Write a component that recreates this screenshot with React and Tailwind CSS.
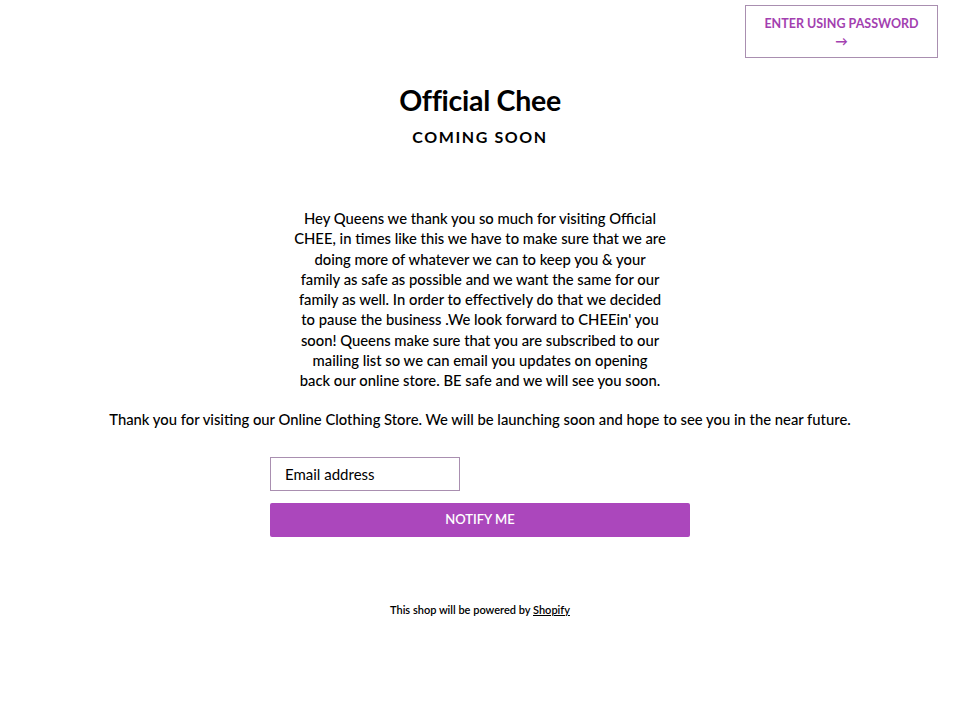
export default function App() {
    return (
        <div className="min-h-[720px] w-full bg-white text-black" style={{ fontFamily: '"Lato", "Open Sans", sans-serif' }}>
            <header className="flex justify-end px-[22px] pt-[5px]">
                <a className="flex h-[53px] w-[193px] flex-col items-center justify-center border border-[#a98fb0] pt-[2px] text-[12.5px] font-bold leading-[18px] text-[#a33fb0]">
                    <span>ENTER USING PASSWORD</span>
                    <span>→</span>
                </a>
            </header>

            <main className="flex flex-col items-center">
                <h1 className="mt-[24px] text-[28.5px] font-bold leading-[36px] tracking-[-0.01em]">Official Chee</h1>
                <h2 className="mt-[7px] text-[16px] font-bold uppercase leading-[24px] tracking-[0.1em]">Coming Soon</h2>

                <p className="mt-[59px] text-center text-[14.8px] font-medium leading-[20.3px]">
                    Hey Queens we thank you so much for visiting Official<br />
                    CHEE, in times like this we have to make sure that we are<br />
                    doing more of whatever we can to keep you &amp; your<br />
                    family as safe as possible and we want the same for our<br />
                    family as well. In order to effectively do that we decided<br />
                    to pause the business .We look forward to CHEEin' you<br />
                    soon! Queens make sure that you are subscribed to our<br />
                    mailing list so we can email you updates on opening<br />
                    back our online store. BE safe and we will see you soon.
                </p>

                <p className="mt-[18px] text-center text-[14.8px] font-medium leading-[20px]">
                    Thank you for visiting our Online Clothing Store. We will be launching soon and hope to see you in the near future.
                </p>

                <form className="mt-[28px] flex w-[420px] flex-col gap-[12px]">
                    <input
                        type="email"
                        placeholder="Email address"
                        className="h-[34px] w-[190px] border border-[#a98fb0] px-[14px] text-[15px] text-black placeholder:text-black outline-none"
                    />
                    <button type="button" className="h-[34px] w-full rounded-[2px] bg-[#ab47bc] text-[13px] font-semibold uppercase text-white">
                        Notify Me
                    </button>
                </form>

                <p className="mt-[65px] text-[11px] font-semibold">
                    This shop will be powered by <a className="underline">Shopify</a>
                </p>
            </main>
        </div>
    );
}
